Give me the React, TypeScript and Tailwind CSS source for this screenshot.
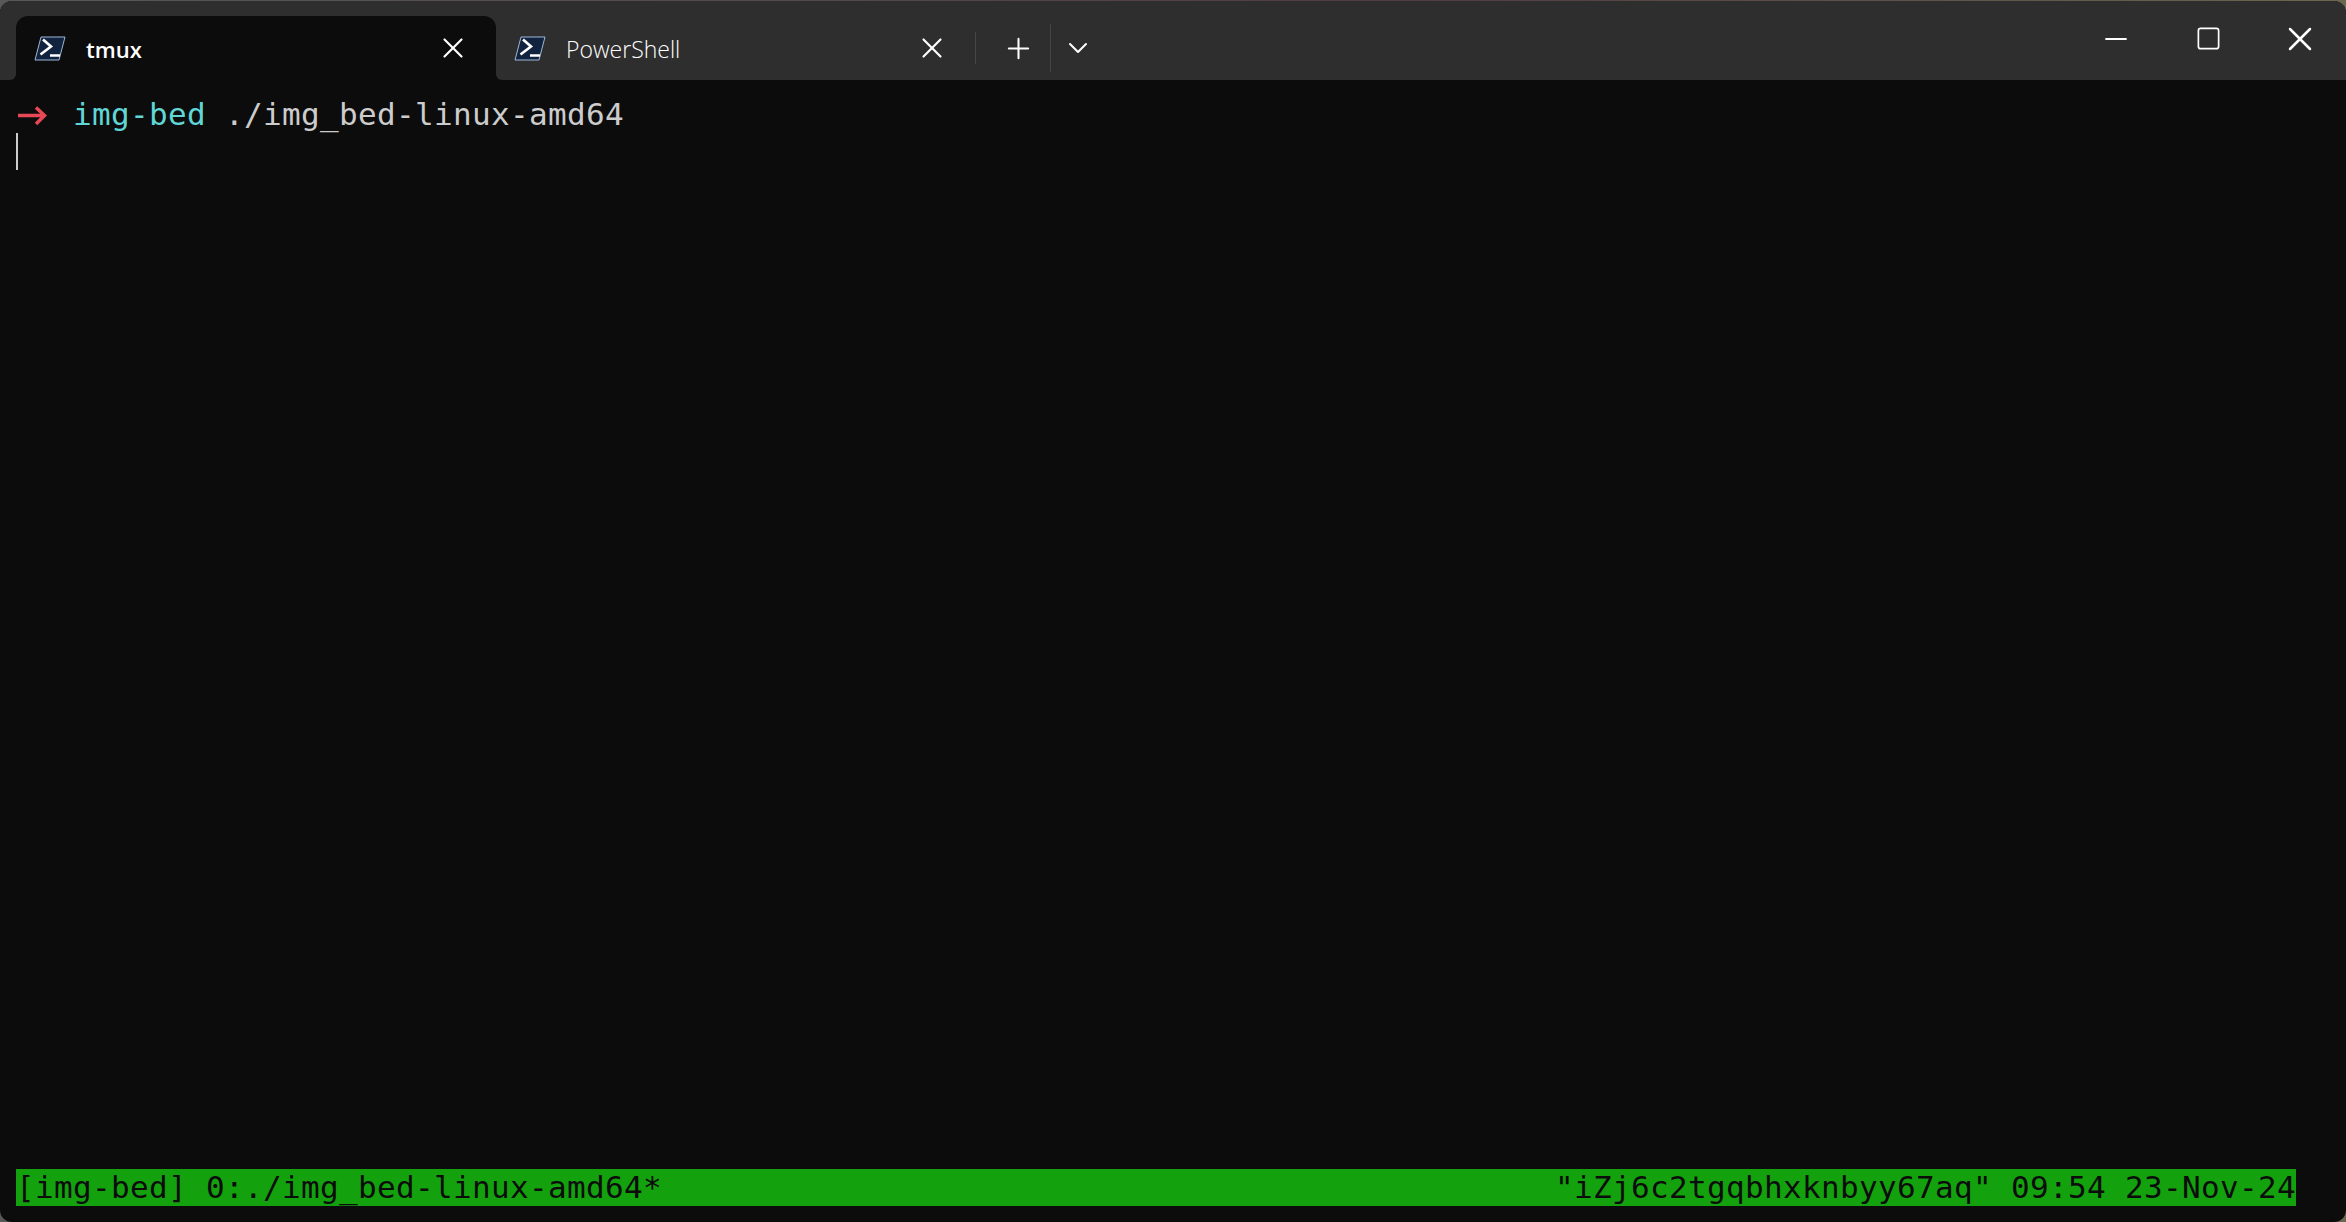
import { X, Plus, ChevronDown, Minus, Square } from 'lucide-react';

const mono = "font-['DejaVu_Sans_Mono',monospace] text-[31px] leading-[37px] tracking-[0.338px] whitespace-pre";

function PsIcon() {
  return (
    <svg width="32" height="25" viewBox="0 0 32 25" className="shrink-0">
      <path d="M7 1H31L25 24H1Z" fill="#12233f" stroke="#9cb8d8" strokeWidth="1" />
      <path d="M9 3.5L17 10.5L6.5 18.5" fill="none" stroke="#ffffff" strokeWidth="2.6" />
      <path d="M16 19.5H26" stroke="#ffffff" strokeWidth="2.6" />
    </svg>
  );
}

function Tab({ title, active, width }: { title: string; active?: boolean; width: string }) {
  return (
    <div className={`relative h-16 flex items-center pl-[18px] rounded-t-xl ${width} ${active ? 'bg-[#0c0c0c]' : ''}`}>
      <PsIcon />
      <span className={`ml-[20px] flex-1 pt-[3px] text-white font-['Open_Sans',sans-serif] ${active ? 'text-[22px] font-semibold' : 'text-[23px] font-light'}`}>{title}</span>
      <X className="w-[34px] h-[34px] mr-[26px] text-white" strokeWidth={1.5} absoluteStrokeWidth />
      {active && (
        <>
          <div className="absolute -left-1.5 bottom-0 w-1.5 h-1.5 bg-[#0c0c0c]">
            <div className="w-full h-full bg-[#2e2e2e] rounded-br-md" />
          </div>
          <div className="absolute -right-1.5 bottom-0 w-1.5 h-1.5 bg-[#0c0c0c]">
            <div className="w-full h-full bg-[#2e2e2e] rounded-bl-md" />
          </div>
        </>
      )}
    </div>
  );
}

export default function App() {
  return (
    <div className="w-[2346px] h-[1222px] pt-px overflow-hidden bg-[linear-gradient(90deg,#585858,#503c42_60%,#6b6650)]">
      <div className="h-full rounded-xl overflow-hidden flex flex-col bg-[#0c0c0c]">
        {/* Title bar */}
        <div className="h-[79px] shrink-0 bg-[#2e2e2e] flex items-end pl-4">
          <Tab title="tmux" active width="w-[480px]" />
          <Tab title="PowerShell" width="w-[479px]" />
          <div className="h-16 flex items-center">
            <div className="w-px h-8 bg-[#454545]" />
            <div className="w-[74px] pl-2.5 flex justify-center">
              <Plus className="w-[33px] h-[33px] text-white" strokeWidth={1.5} absoluteStrokeWidth />
            </div>
            <div className="w-px h-12 bg-[#454545]" />
            <div className="w-[54px] flex justify-center">
              <ChevronDown className="w-8 h-8 text-white" strokeWidth={1.5} absoluteStrokeWidth />
            </div>
          </div>
          <div className="ml-auto self-start flex items-center h-[75px]">
            <div className="w-[92px] flex justify-center">
              <Minus className="w-[34px] h-[34px] text-white" strokeWidth={1.5} absoluteStrokeWidth />
            </div>
            <div className="w-[92px] flex justify-center">
              <Square className="w-[27px] h-[27px] text-white" strokeWidth={1.5} absoluteStrokeWidth />
            </div>
            <div className="w-[92px] flex justify-center">
              <X className="w-10 h-10 text-white" strokeWidth={1.5} absoluteStrokeWidth />
            </div>
          </div>
        </div>

        {/* Terminal */}
        <div className={`flex-1 flex flex-col pt-4 px-4 pb-4 text-[#cccccc] ${mono}`}>
          <div className="h-[37px] flex">
            <svg width="57" height="37" viewBox="0 0 57 37" className="shrink-0">
              <path d="M2 19.5H28M20 11.5L28.5 19.5L20 28" fill="none" stroke="#e74856" strokeWidth="3.5" />
            </svg>
            <span className="text-[#61d6d6]">img-bed</span>
            <span> ./img_bed-linux-amd64</span>
          </div>
          <div className="h-[37px]">
            <div className="w-0.5 h-[37px] bg-[#cccccc]" />
          </div>
          <div className="mt-auto h-[37px] w-[2280px] bg-[#13a10e] text-[#0c0c0c] flex justify-between">
            <span>[img-bed] 0:./img_bed-linux-amd64*</span>
            <span>"iZj6c2tgqbhxknbyy67aq" 09:54 23-Nov-24</span>
          </div>
        </div>
      </div>
    </div>
  );
}
